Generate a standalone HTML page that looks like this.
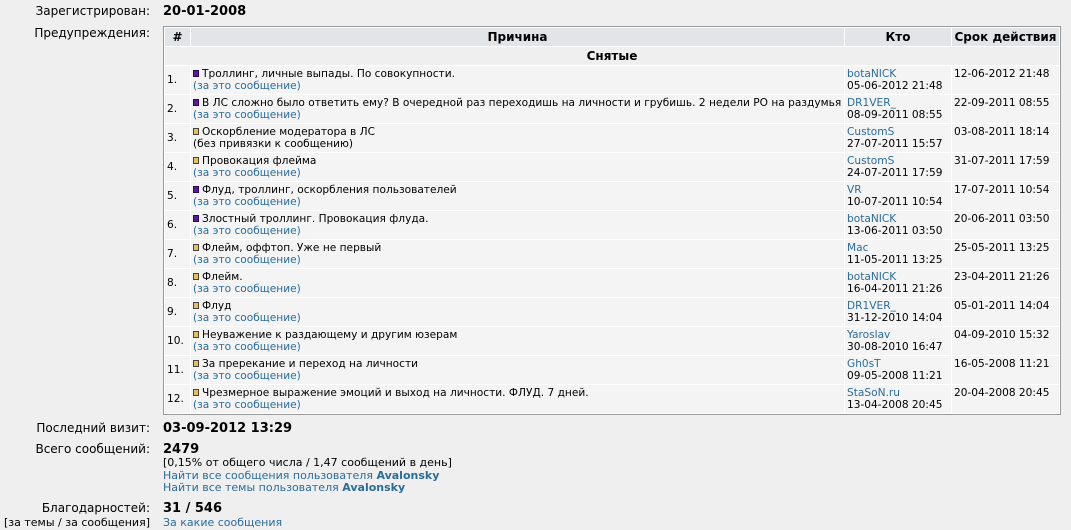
<!DOCTYPE html>
<html><head><meta charset="utf-8"><style>
body{margin:0;background:#efefef;font-family:"DejaVu Sans","Liberation Sans",sans-serif;color:#000;width:1071px;height:530px;overflow:hidden;position:relative}
.lbl{position:absolute;right:921px;font-size:12px;white-space:nowrap}
.val{position:absolute;left:163px;white-space:nowrap}
.b{font-weight:bold;font-size:13px}
a,.l{color:#2a6d9a;text-decoration:none}
table{position:absolute;left:163px;top:26px;border:1px solid #9a9a9a;border-collapse:separate;border-spacing:1px;background:#fff;table-layout:fixed;width:898px;font-size:10.6px}
td,th{padding:0 2px;overflow:hidden;white-space:nowrap}
th{background:#e2e5e8;height:18px;font-size:12px;font-weight:bold;text-align:center;padding:0}
tr.s td{background:#efefef;height:18px;text-align:center;font-weight:bold;font-size:12px;padding:0}
tr.r td{background:#f4f4f4;height:26px;padding:1px 2px;line-height:12px;vertical-align:middle}
tr.r td.w,tr.r td.e{vertical-align:top;padding:2px 2px 0 2px}
.i{display:inline-block;width:4px;height:5px;border:1px solid #333;margin:0 3px 1px 0;vertical-align:middle}
.p{background:#5a1a9a;border-color:#2a0a4a}
.y{background:#e8c060;border-color:#444}
</style></head><body>
<div class="lbl" style="top:4px">Зарегистрирован:</div>
<div class="val b" style="top:4px">20-01-2008</div>
<div class="lbl" style="top:26px">Предупреждения:</div>
<table>
<colgroup><col style="width:25px"><col style="width:653px"><col style="width:106px"><col style="width:107px"></colgroup>
<tr><th>#</th><th>Причина</th><th>Кто</th><th>Срок действия</th></tr>
<tr class="s"><td colspan="4">Снятые</td></tr>
<tr class="r"><td class="n">1.</td><td><span class="i p"></span>Троллинг, личные выпады. По совокупности.<br><a>(за это сообщение)</a></td><td class="w"><a>botaNICK</a><br>05-06-2012 21:48</td><td class="e">12-06-2012 21:48</td></tr>
<tr class="r"><td class="n">2.</td><td><span class="i p"></span>В ЛС сложно было ответить ему? В очередной раз переходишь на личности и грубишь. 2 недели РО на раздумья<br><a>(за это сообщение)</a></td><td class="w"><a>DR1VER_</a><br>08-09-2011 08:55</td><td class="e">22-09-2011 08:55</td></tr>
<tr class="r"><td class="n">3.</td><td><span class="i y"></span>Оскорбление модератора в ЛС<br>(без привязки к сообщению)</td><td class="w"><a>CustomS</a><br>27-07-2011 15:57</td><td class="e">03-08-2011 18:14</td></tr>
<tr class="r"><td class="n">4.</td><td><span class="i y"></span>Провокация флейма<br><a>(за это сообщение)</a></td><td class="w"><a>CustomS</a><br>24-07-2011 17:59</td><td class="e">31-07-2011 17:59</td></tr>
<tr class="r"><td class="n">5.</td><td><span class="i p"></span>Флуд, троллинг, оскорбления пользователей<br><a>(за это сообщение)</a></td><td class="w"><a>VR</a><br>10-07-2011 10:54</td><td class="e">17-07-2011 10:54</td></tr>
<tr class="r"><td class="n">6.</td><td><span class="i p"></span>Злостный троллинг. Провокация флуда.<br><a>(за это сообщение)</a></td><td class="w"><a>botaNICK</a><br>13-06-2011 03:50</td><td class="e">20-06-2011 03:50</td></tr>
<tr class="r"><td class="n">7.</td><td><span class="i y"></span>Флейм, оффтоп. Уже не первый<br><a>(за это сообщение)</a></td><td class="w"><a>Mac</a><br>11-05-2011 13:25</td><td class="e">25-05-2011 13:25</td></tr>
<tr class="r"><td class="n">8.</td><td><span class="i y"></span>Флейм.<br><a>(за это сообщение)</a></td><td class="w"><a>botaNICK</a><br>16-04-2011 21:26</td><td class="e">23-04-2011 21:26</td></tr>
<tr class="r"><td class="n">9.</td><td><span class="i y"></span>Флуд<br><a>(за это сообщение)</a></td><td class="w"><a>DR1VER_</a><br>31-12-2010 14:04</td><td class="e">05-01-2011 14:04</td></tr>
<tr class="r"><td class="n">10.</td><td><span class="i y"></span>Неуважение к раздающему и другим юзерам<br><a>(за это сообщение)</a></td><td class="w"><a>Yaroslav</a><br>30-08-2010 16:47</td><td class="e">04-09-2010 15:32</td></tr>
<tr class="r"><td class="n">11.</td><td><span class="i y"></span>За пререкание и переход на личности<br><a>(за это сообщение)</a></td><td class="w"><a>Gh0sT</a><br>09-05-2008 11:21</td><td class="e">16-05-2008 11:21</td></tr>
<tr class="r"><td class="n">12.</td><td><span class="i y"></span>Чрезмерное выражение эмоций и выход на личности. ФЛУД. 7 дней.<br><a>(за это сообщение)</a></td><td class="w"><a>StaSoN.ru</a><br>13-04-2008 20:45</td><td class="e">20-04-2008 20:45</td></tr>
</table>
<div class="lbl" style="top:421px">Последний визит:</div>
<div class="val b" style="top:421px">03-09-2012 13:29</div>
<div class="lbl" style="top:442px">Всего сообщений:</div>
<div class="val b" style="top:442px">2479</div>
<div class="val" style="top:457px;font-size:11px;line-height:12.5px">[0,15% от общего числа / 1,47 сообщений в день]<br><a>Найти все сообщения пользователя <b>Avalonsky</b></a><br><a>Найти все темы пользователя <b>Avalonsky</b></a></div>
<div class="lbl" style="top:501px">Благодарностей:</div>
<div class="val b" style="top:501px">31 / 546</div>
<div class="lbl" style="top:516px;font-size:11px">[за темы / за сообщения]</div>
<div class="val" style="top:516px;font-size:11px"><a>За какие сообщения</a></div>
</body></html>
